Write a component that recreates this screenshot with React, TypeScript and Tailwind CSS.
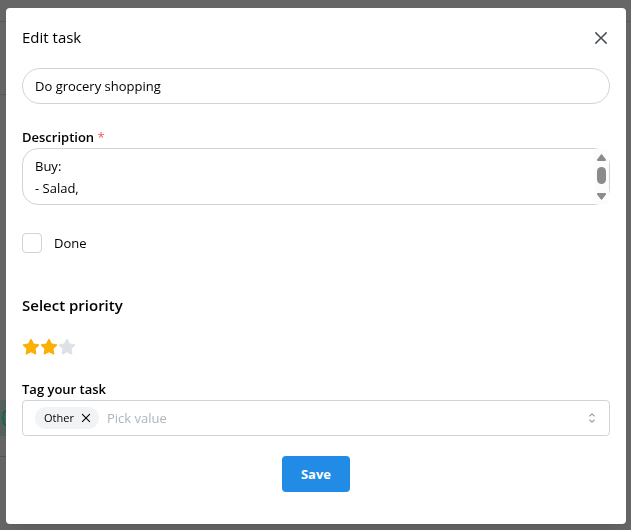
import { useState } from "react";

function CloseGlyph({ className }: { className: string }) {
  return (
    <svg viewBox="0 0 15 15" fill="currentColor" className={className} aria-hidden="true">
      <path
        fillRule="evenodd"
        clipRule="evenodd"
        d="M11.7816 4.03157C12.0062 3.80702 12.0062 3.44295 11.7816 3.2184C11.5571 2.99385 11.193 2.99385 10.9685 3.2184L7.50005 6.68682L4.03164 3.2184C3.80708 2.99385 3.44301 2.99385 3.21846 3.2184C2.99391 3.44295 2.99391 3.80702 3.21846 4.03157L6.68688 7.49999L3.21846 10.9684C2.99391 11.193 2.99391 11.5571 3.21846 11.7816C3.44301 12.0062 3.80708 12.0062 4.03164 11.7816L7.50005 8.31316L10.9685 11.7816C11.193 12.0062 11.5571 12.0062 11.7816 11.7816C12.0062 11.5571 12.0062 11.193 11.7816 10.9684L8.31322 7.49999L11.7816 4.03157Z"
      />
    </svg>
  );
}

function ChevronsGlyph() {
  return (
    <svg viewBox="0 0 15 15" fill="currentColor" className="size-4 text-[#868e96]" aria-hidden="true">
      <path
        fillRule="evenodd"
        clipRule="evenodd"
        d="M4.93179 5.43179C4.75605 5.60753 4.75605 5.89245 4.93179 6.06819C5.10753 6.24392 5.39245 6.24392 5.56819 6.06819L7.49999 4.13638L9.43179 6.06819C9.60753 6.24392 9.89245 6.24392 10.0682 6.06819C10.2439 5.89245 10.2439 5.60753 10.0682 5.43179L7.81819 3.18179C7.73379 3.0974 7.61933 3.04999 7.49999 3.04999C7.38064 3.04999 7.26618 3.0974 7.18179 3.18179L4.93179 5.43179ZM10.0682 9.56819C10.2439 9.39245 10.2439 9.10753 10.0682 8.93179C9.89245 8.75606 9.60753 8.75606 9.43179 8.93179L7.49999 10.8636L5.56819 8.93179C5.39245 8.75606 5.10753 8.75606 4.93179 8.93179C4.75605 9.10753 4.75605 9.39245 4.93179 9.56819L7.18179 11.8182C7.35753 11.9939 7.64245 11.9939 7.81819 11.8182L10.0682 9.56819Z"
      />
    </svg>
  );
}

function Star({ filled }: { filled: boolean }) {
  return (
    <svg
      viewBox="0 0 24 24"
      className={filled ? "size-[18px] text-[#fab005]" : "size-[18px] text-[#dee2e6]"}
      fill="currentColor"
      aria-hidden="true"
    >
      <path d="M8.243 7.34l-6.38 .925l-.113 .023a1 1 0 0 0 -.44 1.684l4.622 4.499l-1.09 6.355l-.013 .11a1 1 0 0 0 1.464 .944l5.706 -3l5.693 3l.1 .046a1 1 0 0 0 1.352 -1.1l-1.091 -6.355l4.624 -4.5l.078 -.085a1 1 0 0 0 -.633 -1.62l-6.38 -.926l-2.852 -5.78a1 1 0 0 0 -1.794 0l-2.853 5.78z" />
    </svg>
  );
}

function PageBehind() {
  return (
    <div className="flex min-h-screen flex-col bg-[#666]" aria-hidden="true">
      <div className="h-[22px] border-b border-[#5a5a5a]" />
      <div className="flex h-[73px]">
        <div className="w-1/2 border-b border-[#5a5a5a]" />
      </div>
      <div className="h-[305px]" />
      <div className="flex h-9">
        <div className="flex w-1/2 items-center bg-[#56605d]">
          <svg viewBox="0 0 10 18" className="h-[18px] w-[10px] text-[#0a6a48]" fill="none" stroke="currentColor" strokeWidth="1.5">
            <path d="M6.500 2C3.500 2 3.500 3.500 3.500 5V6.500C3.500 8 3 9 1.500 9C3 9 3.500 10 3.500 11.500V13C3.500 14.500 3.500 16 6.500 16" />
          </svg>
        </div>
      </div>
      <div className="flex h-[21px]">
        <div className="w-1/2 border-b border-[#555]" />
      </div>
      <div className="flex-1" />
    </div>
  );
}

export default function App() {
  const [title, setTitle] = useState("Do grocery shopping");
  const [description, setDescription] = useState("Buy:\n- Salad,\n- Milk");
  const [done, setDone] = useState(false);
  const [rating, setRating] = useState(2);
  const [tags, setTags] = useState(["Other"]);

  return (
    <div className="font-['Open_Sans','Noto_Sans',sans-serif] text-sm text-black">
      <PageBehind />
      <div className="fixed inset-0 overflow-hidden pt-2 pr-[5px] pl-1.5">
        <section
          role="dialog"
          aria-labelledby="dialog-title"
          className="rounded bg-white px-4 pb-8 shadow-[0_1px_3px_rgba(0,0,0,0.05),0_28px_23px_-7px_rgba(0,0,0,0.05),0_12px_12px_-7px_rgba(0,0,0,0.04)]"
        >
          <header className="flex h-15 items-center justify-between">
            <h2 id="dialog-title" className="text-[15px]">Edit task</h2>
            <button type="button" aria-label="Close" className="flex size-[18px] items-center justify-center text-[#495057]">
              <CloseGlyph className="size-5 shrink-0" />
            </button>
          </header>
          <form onSubmit={(e) => e.preventDefault()} className="flex flex-col">
            <input
              aria-label="Task name"
              value={title}
              onChange={(e) => setTitle(e.target.value)}
              className="h-9 rounded-full border border-[#ced4da] px-3 text-[13px] outline-none"
            />

            <label htmlFor="description" className="mt-[22px] text-[13px] leading-[22px] font-semibold">
              Description <span className="font-normal text-[#fa5252]">*</span>
            </label>
            <div className="relative h-[57px]">
              <textarea
                id="description"
                required
                value={description}
                onChange={(e) => setDescription(e.target.value)}
                className="block h-full w-full resize-none overflow-hidden rounded-[16px] border border-[#ced4da] px-3 py-1.5 text-[13px] leading-[22px] outline-none"
              />
              <svg viewBox="0 0 15 55" className="absolute top-px right-px h-[55px] w-[15px]" aria-hidden="true">
                <path d="M0 0H15V55H0Z" fill="#fcfcfc" />
                <path d="M7.500 5.500L11.500 10.500Q12 11.500 11 11.500H4Q3 11.500 3.500 10.500Z" fill="#8b8b8b" stroke="#8b8b8b" />
                <rect x="3" y="18" width="9" height="17" rx="4.500" fill="#8b8b8b" />
                <path d="M7.500 50.500L3.500 45.500Q3 44.500 4 44.500H11Q12 44.500 11.500 45.500Z" fill="#8b8b8b" stroke="#8b8b8b" />
              </svg>
            </div>

            <div className="mt-7 flex items-center gap-3">
              <input
                id="done"
                type="checkbox"
                checked={done}
                onChange={(e) => setDone(e.target.checked)}
                className="size-5 appearance-none rounded border border-[#ced4da] bg-white checked:border-[#228be6] checked:bg-[#228be6]"
              />
              <label htmlFor="done" className="text-[13px] leading-5">Done</label>
            </div>

            <fieldset className="mt-10">
              <legend className="text-[15px] leading-6 font-semibold">Select priority</legend>
              <div className="mt-[21px] flex h-[18px]">
                {[1, 2, 3].map((n) => (
                  <label key={n} className="cursor-pointer">
                    <input
                      type="radio"
                      name="priority"
                      aria-label={`Priority ${n}`}
                      checked={rating === n}
                      onChange={() => setRating(n)}
                      className="sr-only"
                    />
                    <Star filled={n <= rating} />
                  </label>
                ))}
              </div>
            </fieldset>

            <label htmlFor="tags" className="mt-[22px] text-[13px] leading-[22px] font-semibold">
              Tag your task
            </label>
            <div className="flex h-9 items-center gap-2 rounded border border-[#ced4da] pr-[9px] pl-3">
              {tags.map((tag) => (
                <span key={tag} className="flex h-[22px] items-center gap-[5px] rounded-full bg-[#f1f3f5] pr-1.5 pl-[9px] text-[11px]">
                  {tag}
                  <button
                    type="button"
                    aria-label={`Remove ${tag}`}
                    onClick={() => setTags(tags.filter((t) => t !== tag))}
                    className="flex size-[14px] items-center justify-center"
                  >
                    <CloseGlyph className="size-[14px] shrink-0" />
                  </button>
                </span>
              ))}
              <input
                id="tags"
                placeholder="Pick value"
                className="min-w-0 flex-1 text-[13px] outline-none placeholder:text-[#adb5bd]"
              />
              <ChevronsGlyph />
            </div>

            <button type="submit" className="mt-5 h-9 self-center rounded bg-[#228be6] px-[19px] text-[13px] font-bold text-white">
              Save
            </button>
          </form>
        </section>
      </div>
    </div>
  );
}
